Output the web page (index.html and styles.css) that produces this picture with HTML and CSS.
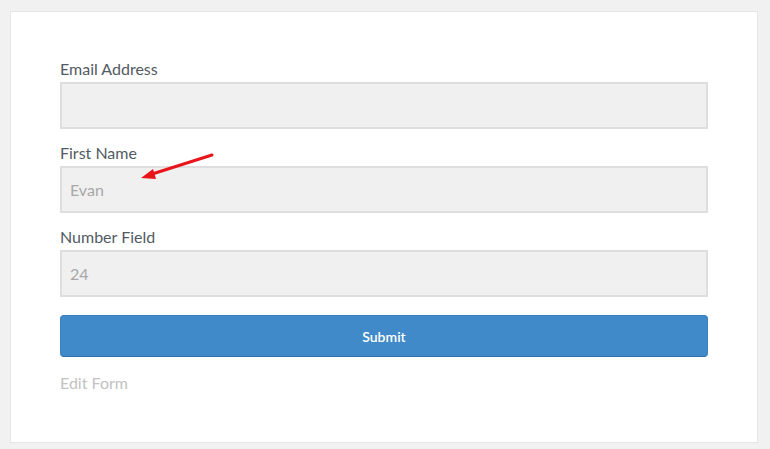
FILE: index.html
```html
<!DOCTYPE html>
<html>
<head>
<meta charset="UTF-8">
<title>Form</title>
<link rel="stylesheet" href="styles.css">
</head>
<body>

  <div class="card">
    <form class="form">

      <div class="field">
        <label class="label">Email Address</label>
        <input class="input" type="text" value="">
      </div>

      <div class="field">
        <label class="label">First Name</label>
        <input class="input" type="text" value="Evan">
      </div>

      <div class="field">
        <label class="label">Number Field</label>
        <input class="input" type="text" value="24">
      </div>

      <button class="submit" type="button">Submit</button>

      <a class="edit">Edit Form</a>

    </form>

    <!-- red pointer over the first name field -->
    <svg class="arrow" width="90" height="40" viewBox="0 0 90 40">
      <line x1="81" y1="4" x2="18" y2="24" stroke="#e8161b" stroke-width="3" stroke-linecap="round"/>
      <polygon points="10,27 22,18 25,28" fill="#e8161b"/>
    </svg>
  </div>

</body>
</html>
```

FILE: styles.css
```css
body
{
  margin : 11px 12px 0 10px;
  background : #f1f1f1;
  font-family : Lato, "Open Sans", sans-serif;
}

.card
{
  position : relative;
  height : 432px;
  background : #fff;
  border : 1px solid #e6e6e6;
  box-sizing : border-box;
  padding : 46px 49px 0 49px;
}

.form
{
  display : flex;
  flex-direction : column;
}

.field
{
  display : flex;
  flex-direction : column;
  margin-bottom : 13px;
}

.label
{
  font-size : 16px;
  line-height : 22px;
  color : #525b63;
  margin-bottom : 2px;
}

.input
{
  height : 47px;
  box-sizing : border-box;
  border : 2px solid #dedede;
  background : #f0f0f0;
  padding : 0 8px;
  font-family : inherit;
  font-size : 16px;
  color : #a8a8a8;
  outline : none;
}

.submit
{
  margin-top : 5px;
  height : 42px;
  border : 1px solid #3a80bf;
  border-bottom-color : #2f6fa9;
  border-radius : 4px;
  background : #408ac9;
  color : #fff;
  font-family : inherit;
  font-size : 14px;
  font-weight : 600;
}

.edit
{
  margin-top : 16px;
  font-size : 16px;
  line-height : 20px;
  color : #c2c2c2;
}

.arrow
{
  position : absolute;
  left : 120px;
  top : 139px;
}
```
